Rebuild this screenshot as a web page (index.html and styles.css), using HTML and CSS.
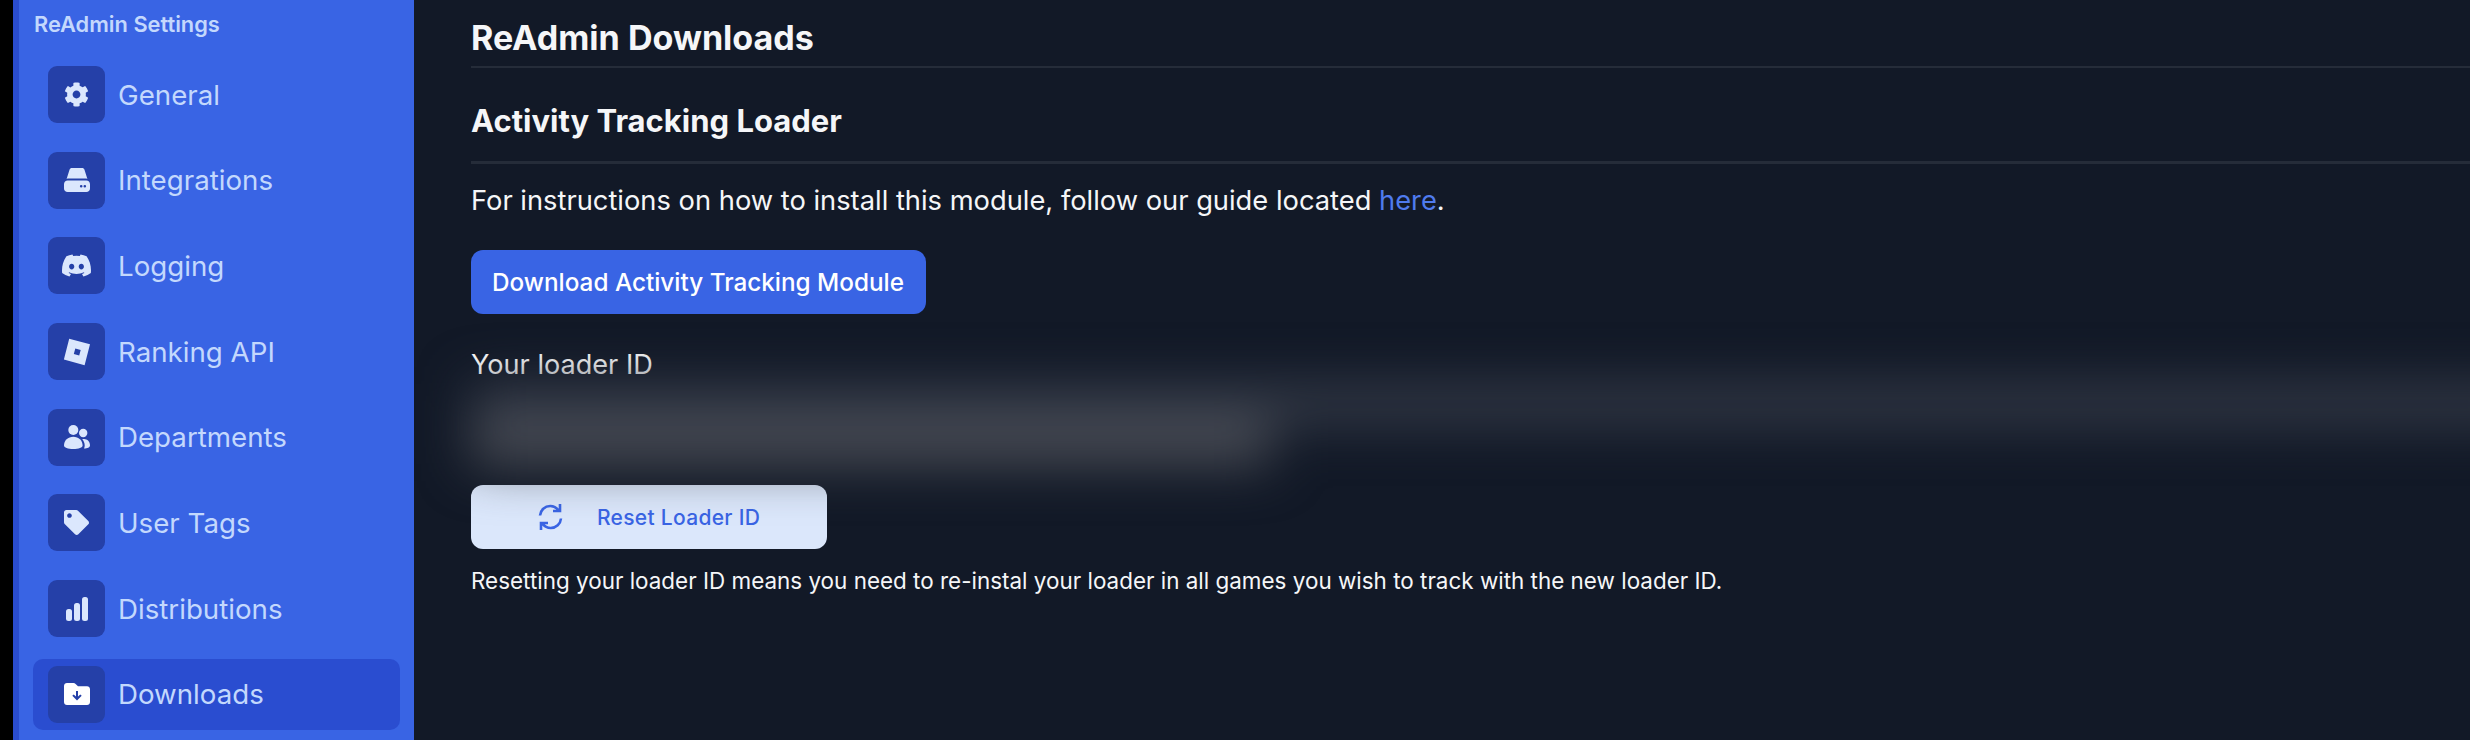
FILE: index.html
```html
<!DOCTYPE html>
<html>
<head>
  <title>ReAdmin Downloads</title>
  <link rel="stylesheet" href="styles.css">
</head>
<body>
  <div class="sidebar">
    <div class="sidebar-title">ReAdmin Settings</div>
    <div class="nav">
      <div class="nav-item">
        <span class="nav-icon">
          <svg width="25" height="25" viewBox="0 0 512 512"><path d="M487.4 315.7l-42.6-24.6c4.3-23.2 4.3-47 0-70.2l42.6-24.6c4.9-2.8 7.1-8.6 5.5-14-11.1-35.6-30-67.8-54.7-94.6-3.8-4.1-10-5.1-14.8-2.3L380.8 110c-17.9-15.4-38.5-27.3-60.8-35.1V25.8c0-5.6-3.9-10.5-9.4-11.7-36.7-8.2-74.3-7.8-109.2 0-5.5 1.2-9.4 6.1-9.4 11.7V75c-22.2 7.9-42.8 19.8-60.8 35.1L88.7 85.5c-4.9-2.8-11-1.9-14.8 2.3-24.7 26.7-43.6 58.9-54.7 94.6-1.7 5.4.6 11.2 5.5 14L67.3 221c-4.3 23.2-4.3 47 0 70.2l-42.6 24.6c-4.9 2.8-7.1 8.6-5.5 14 11.1 35.6 30 67.8 54.7 94.6 3.8 4.1 10 5.1 14.8 2.3l42.6-24.6c17.9 15.4 38.5 27.3 60.8 35.1v49.2c0 5.6 3.9 10.5 9.4 11.7 36.7 8.2 74.3 7.8 109.2 0 5.5-1.2 9.4-6.1 9.4-11.7v-49.2c22.2-7.9 42.8-19.8 60.8-35.1l42.6 24.6c4.9 2.8 11 1.9 14.8-2.3 24.7-26.7 43.6-58.9 54.7-94.6 1.5-5.5-.7-11.3-5.6-14.1zM256 336c-44.1 0-80-35.9-80-80s35.9-80 80-80 80 35.9 80 80-35.9 80-80 80z"/></svg>
        </span>
        General
      </div>
      <div class="nav-item">
        <span class="nav-icon">
          <svg width="26" height="24" viewBox="0 0 26 24"><path d="M5.6 1.6C5.9.6 6.800 0 7.800 0h10.400c1 0 1.900.6 2.200 1.600l3 9.400c-.6-.3-1.300-.4-2-.4H4.600c-.7 0-1.400.1-2 .4z"/><path fill-rule="evenodd" d="M3.600 12.600h18.800c2 0 3.600 1.600 3.600 3.600v4.200c0 2-1.600 3.600-3.600 3.600H3.600C1.600 24 0 22.400 0 20.400v-4.200c0-2 1.600-3.600 3.600-3.600zM17.200 17a1.300 1.300 0 1 0 0 2.600 1.300 1.300 0 0 0 0-2.600zm3.600 0a1.300 1.300 0 1 0 0 2.600 1.300 1.300 0 0 0 0-2.600z"/></svg>
        </span>
        Integrations
      </div>
      <div class="nav-item">
        <span class="nav-icon">
          <svg width="29" height="29" viewBox="0 0 16 16"><path d="M13.545 2.907a13.227 13.227 0 0 0-3.257-1.011.05.05 0 0 0-.052.025c-.141.25-.297.577-.406.833a12.19 12.19 0 0 0-3.658 0 8.258 8.258 0 0 0-.412-.833.051.051 0 0 0-.052-.025c-1.125.194-2.22.534-3.257 1.011a.041.041 0 0 0-.021.018C.356 6.024-.213 9.047.066 12.032c.001.014.01.028.021.037a13.276 13.276 0 0 0 3.995 2.02.05.05 0 0 0 .056-.019c.308-.42.582-.863.818-1.329a.05.05 0 0 0-.01-.059.051.051 0 0 0-.018-.011 8.875 8.875 0 0 1-1.248-.595.05.05 0 0 1-.02-.066.051.051 0 0 1 .015-.019c.084-.063.168-.129.248-.195a.05.05 0 0 1 .051-.007c2.619 1.196 5.454 1.196 8.041 0a.052.052 0 0 1 .053.007c.08.066.164.132.248.195a.051.051 0 0 1-.004.085 8.254 8.254 0 0 1-1.249.594.05.05 0 0 0-.03.03.052.052 0 0 0 .003.041c.24.465.515.909.817 1.329a.05.05 0 0 0 .056.019 13.235 13.235 0 0 0 4.001-2.02.049.049 0 0 0 .021-.037c.334-3.451-.559-6.449-2.366-9.106a.034.034 0 0 0-.02-.019Zm-8.198 7.307c-.789 0-1.438-.724-1.438-1.612 0-.889.637-1.613 1.438-1.613.807 0 1.45.73 1.438 1.613 0 .888-.637 1.612-1.438 1.612Zm5.316 0c-.788 0-1.438-.724-1.438-1.612 0-.889.637-1.613 1.438-1.613.807 0 1.451.73 1.438 1.613 0 .888-.631 1.612-1.438 1.612Z"/></svg>
        </span>
        Logging
      </div>
      <div class="nav-item">
        <span class="nav-icon">
          <svg width="28" height="28" viewBox="0 0 28 28"><path fill-rule="evenodd" d="M6.200 0.800L27 6.300 21.600 27.200.9 21.600zM12.300 10.500L10.800 15.900 16.200 17.400 17.700 12z"/></svg>
        </span>
        Ranking API
      </div>
      <div class="nav-item">
        <span class="nav-icon">
          <svg width="26" height="24" viewBox="0 0 26 24"><circle cx="9.300" cy="5" r="5"/><circle cx="19.200" cy="8" r="4.200"/><path d="M0 20.500C0 15.500 4 11.700 9.300 11.700s9.300 3.800 9.300 8.800c0 2.300-4 3.500-9.300 3.500S0 22.800 0 20.500z"/><path d="M20 23.500c.5-.8.700-1.700.7-2.900 0-2.500-.9-4.700-2.500-6.400.6-.2 1.300-.2 1.900-.2 3.300 0 5.900 2.800 5.900 6.200 0 2.300-2.500 3.100-6 3.300z"/></svg>
        </span>
        Departments
      </div>
      <div class="nav-item">
        <span class="nav-icon">
          <svg width="25" height="25" viewBox="0 0 512 512"><path d="M0 252.118V48C0 21.490 21.490 0 48 0h204.118a48 48 0 0 1 33.941 14.059l211.882 211.882c18.745 18.745 18.745 49.137 0 67.882L293.823 497.941c-18.745 18.745-49.137 18.745-67.882 0L14.059 286.059A48 48 0 0 1 0 252.118zM112 64c-26.510 0-48 21.490-48 48s21.490 48 48 48 48-21.490 48-48-21.490-48-48-48z"/></svg>
        </span>
        User Tags
      </div>
      <div class="nav-item">
        <span class="nav-icon">
          <svg width="22" height="24" viewBox="0 0 22 24"><rect x="0" y="12" width="6" height="12" rx="2.500"/><rect x="8" y="6" width="6" height="18" rx="2.500"/><rect x="16" y="0" width="6" height="24" rx="2.500"/></svg>
        </span>
        Distributions
      </div>
      <div class="nav-item active">
        <span class="nav-icon">
          <svg class="icon-white" width="26" height="22" viewBox="0 0 26 22"><path fill-rule="evenodd" d="M3 0h6.500c.8 0 1.500.3 2.100.9L14 3.300h9c1.700 0 3 1.300 3 3V19c0 1.700-1.300 3-3 3H3c-1.700 0-3-1.300-3-3V3c0-1.700 1.300-3 3-3zM12 8v5.600L9.700 11.400 8.300 12.800 13 17.400l4.700-4.600-1.400-1.400L14 13.600V8z"/></svg>
        </span>
        Downloads
      </div>
    </div>
  </div>

  <div class="main">
    <h1>ReAdmin Downloads</h1>
    <h2>Activity Tracking Loader</h2>
    <p class="guide">For instructions on how to install this module, follow our guide located <a href="#">here</a>.</p>
    <button class="btn-primary">Download Activity Tracking Module</button>
    <div class="loader-label">Your loader ID</div>
    <div class="loader-id">
      <div class="loader-line"></div>
      <div class="loader-line short"></div>
    </div>
    <button class="btn-light">
      <svg width="25" height="28" viewBox="0 0 24 28"><path d="M1.500 12.500C2 7 6.300 3 11.800 3c3.200 0 6 1.300 8.200 4.200M21.500 1v7h-7M22.500 15.500C22 21 17.700 25 12.200 25c-3.200 0-6-1.300-8.200-4.200M2.500 27v-7h7"/></svg>
      Reset Loader ID
    </button>
    <p class="note">Resetting your loader ID means you need to re-instal your loader in all games you wish to track with the new loader ID.</p>
  </div>
</body>
</html>
```

FILE: styles.css
```css
:root {
  --primary-color: #3964e4;
  --active-color: #2a4dd0;
  --tile-color: #2540a8;
  --icon-color: #dbe7fd;
  --nav-text: #c3d8fd;
  --bg-color: #121927;
  --rule-color: #252c39;
  --text-color: #f5f6f8;
}

html, body {
  height: 100%;
}

body {
  margin: 0;
  padding-left: 13px;
  box-sizing: border-box;
  display: flex;
  overflow: hidden;
  background-color: #000;
  font-family: 'Inter', sans-serif;
  color: var(--text-color);
}

.sidebar {
  width: 401px;
  flex-shrink: 0;
  box-sizing: border-box;
  border-left: 6px solid var(--active-color);
  padding: 0 14px;
  background-color: var(--primary-color);
}

.sidebar-title {
  height: 59px;
  padding: 11px 1px 0;
  box-sizing: border-box;
  font-size: 21.8px;
  line-height: 26px;
  font-weight: 600;
  color: var(--nav-text);
}

.nav {
  display: flex;
  flex-direction: column;
  gap: 14.7px;
}

.nav-item {
  height: 71px;
  box-sizing: border-box;
  padding: 7px 15px;
  display: flex;
  align-items: center;
  gap: 13px;
  border-radius: 10px;
  font-size: 27.7px;
  color: var(--nav-text);
}

.nav-item.active {
  background-color: var(--active-color);
}

.nav-icon {
  width: 57px;
  height: 57px;
  flex-shrink: 0;
  display: flex;
  align-items: center;
  justify-content: center;
  border-radius: 9px;
  background-color: var(--tile-color);
}

.nav-icon svg {
  fill: var(--icon-color);
}

.nav-icon svg.icon-white {
  fill: #fff;
}

.main {
  flex: 1;
  min-width: 0;
  padding-left: 57px;
  background-color: var(--bg-color);
  overflow: hidden;
}

h1 {
  margin: 0;
  height: 68px;
  box-sizing: border-box;
  padding-top: 18px;
  border-bottom: 2px solid var(--rule-color);
  font-size: 34.100px;
  line-height: 40px;
  font-weight: 700;
}

h2 {
  margin: 0;
  height: 96px;
  box-sizing: border-box;
  padding-top: 35px;
  border-bottom: 3px solid var(--rule-color);
  font-size: 31px;
  line-height: 36px;
  font-weight: 700;
}

.guide {
  margin: 20px 0 0;
  font-size: 27.300px;
  line-height: 34px;
}

.guide a {
  color: #4f7bee;
  text-decoration: none;
}

button {
  display: flex;
  align-items: center;
  border: none;
  font-family: inherit;
  cursor: pointer;
}

.btn-primary {
  margin-top: 32px;
  width: 455px;
  height: 64px;
  padding: 0 21px;
  border-radius: 12px;
  background-color: var(--primary-color);
  color: #fff;
  font-size: 24.300px;
  font-weight: 500;
  white-space: nowrap;
}

.loader-label {
  margin-top: 34px;
  font-size: 27.100px;
  line-height: 34px;
  color: #fff;
}

/* the id itself is blurred out in the screenshot */
.loader-id {
  height: 103px;
  padding-top: 2px;
  box-sizing: border-box;
  margin-right: -60px;
  filter: blur(26px);
}

.loader-line {
  height: 40px;
  background-color: #353b48;
}

.loader-line.short {
  width: 800px;
  background-color: #4b4e56;
}

.btn-light {
  width: 356px;
  height: 64px;
  padding: 0 0 0 67px;
  gap: 34px;
  border-radius: 12px;
  background-color: #dbe7fb;
  color: var(--primary-color);
  font-size: 21px;
  font-weight: 500;
  letter-spacing: 0.3px;
}

.btn-light svg {
  fill: none;
  stroke: var(--primary-color);
  stroke-width: 2.6;
  flex-shrink: 0;
}

.note {
  margin: 19px 0 0;
  font-size: 22.450px;
  line-height: 26px;
}
```
